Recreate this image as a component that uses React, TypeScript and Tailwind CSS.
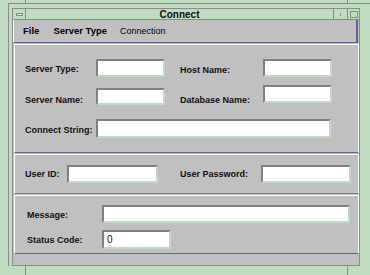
import React from "react";

const inputCls =
  "bg-white border-t-2 border-l-2 border-b-2 border-r-2 border-t-[#808080] border-l-[#808080] border-b-[#c0dcc0] border-r-[#c0dcc0]";

function Field({ w, h = 18, value }: { w: string; h?: number; value?: string }) {
  return (
    <div
      className={`${inputCls} ${w} ${h === 19 ? "h-[19px]" : h === 17 ? "h-[17px]" : "h-[18px]"} flex items-center pl-[3px] text-[10px] leading-none`}
    >
      {value}
    </div>
  );
}

export default function App() {
  return (
    <div className="w-[370px] h-[275px] bg-[#c0dcc0] overflow-hidden relative text-black font-['Liberation_Sans',Arial,sans-serif]">
      {/* resize corner marks */}
      <div className="absolute left-[25px] top-0 w-px h-[3px] bg-[#8c8c8c]" />
      <div className="absolute left-[347px] top-0 w-px h-[3px] bg-[#8c8c8c]" />
      <div className="absolute left-[25px] top-[266px] w-px h-[9px] bg-[#8c8c8c]" />
      <div className="absolute left-[347px] top-[266px] w-px h-[9px] bg-[#8c8c8c]" />

      <div className="pt-[3px] pl-[8px]">
        <div className="border-t border-l border-[#8c8c8c] pt-[4px] pl-[3px]">
          <div className="w-[348px] h-[258px] border border-[#8c8c8c] flex flex-col">
            {/* title bar */}
            <div className="h-[11px] border-b border-[#8c8c8c] flex items-stretch bg-[#c0dcc0]">
              <div className="w-[13px] border-r border-[#8c8c8c] flex items-center justify-center">
                <div className="w-[7px] h-[3px] border border-[#8c8c8c] bg-[#d8ecd8]" />
              </div>
              <div className="flex-1 flex items-center justify-center text-[10px] font-bold leading-none pt-[1px] text-[#111]">
                Connect
              </div>
              <div className="w-[14px] border-l border-[#8c8c8c] flex flex-col items-center justify-center gap-[1px]">
                <div className="w-px h-px bg-[#707070]" />
                <div className="w-px h-px bg-[#707070]" />
              </div>
              <div className="w-[12px] border-l border-[#8c8c8c] flex items-center justify-center">
                <div className="w-[8px] h-[7px] border border-[#8c8c8c]" />
              </div>
            </div>

            {/* client */}
            <div className="flex-1 bg-[#c0c0c0] flex flex-col">
              {/* menu */}
              <div className="h-[23px] border-l border-l-white border-b border-b-[#636394] border-r-2 border-r-[#636394] mr-px flex items-center text-[9.5px] leading-none">
                <span className="ml-[9px] font-bold">File</span>
                <span className="ml-[14px] font-bold">Server Type</span>
                <span className="ml-[13px] text-[9px]">Connection</span>
              </div>

              {/* panel 1 */}
              <div className="mt-px ml-px h-[109px] border-t border-l border-r border-white border-b border-b-[#636394] flex flex-col pl-[10px] text-[9px] font-bold leading-none text-[#111]">
                <div className="mt-[14px] flex items-center">
                  <div className="w-[71px] pt-[3px]">Server Type:</div>
                  <Field w="w-[69px]" />
                  <div className="ml-[15px] w-[83px] pt-[5px]">Host Name:</div>
                  <Field w="w-[69px]" />
                </div>
                <div className="mt-[8px] flex items-start h-[21px]">
                  <div className="w-[71px] mt-[11px]">Server Name:</div>
                  <div className="mt-[3px]">
                    <Field w="w-[69px]" h={17} />
                  </div>
                  <div className="ml-[15px] w-[83px] mt-[11px]">Database Name:</div>
                  <Field w="w-[69px]" />
                </div>
                <div className="mt-[13px] flex items-center">
                  <div className="w-[71px] pt-[3px]">Connect String:</div>
                  <Field w="w-[235px]" h={19} />
                </div>
              </div>

              {/* panel 2 */}
              <div className="mt-px ml-px h-[40px] border-t border-l border-r border-white border-b border-b-[#7a7a8e] flex items-center pl-[10px] text-[9px] font-bold leading-none text-[#111]">
                <div className="w-[42px] pt-[1px]">User ID:</div>
                <Field w="w-[91px]" />
                <div className="ml-[22px] w-[81px] pt-[1px]">User Password:</div>
                <Field w="w-[90px]" />
              </div>

              {/* panel 3 */}
              <div className="mt-px ml-px h-[59px] border-t border-l border-r border-white border-b border-b-[#636394] flex flex-col pl-[12px] text-[9px] font-bold leading-none text-[#111]">
                <div className="mt-[9px] flex items-center">
                  <div className="w-[75px] pt-[3px]">Message:</div>
                  <Field w="w-[248px]" />
                </div>
                <div className="mt-[7px] flex items-center">
                  <div className="w-[75px] pt-[2px]">Status Code:</div>
                  <div className="w-[69px] h-[19px] bg-white border-t-2 border-l-2 border-b-2 border-r-2 border-t-[#808080] border-l-[#808080] border-b-[#c0dcc0] border-r-[#c0dcc0] flex items-center pl-[3px] pt-[1px] font-normal text-[10px]">
                    0
                  </div>
                </div>
              </div>
              <div className="flex-1" />
            </div>
          </div>
        </div>
      </div>
    </div>
  );
}
